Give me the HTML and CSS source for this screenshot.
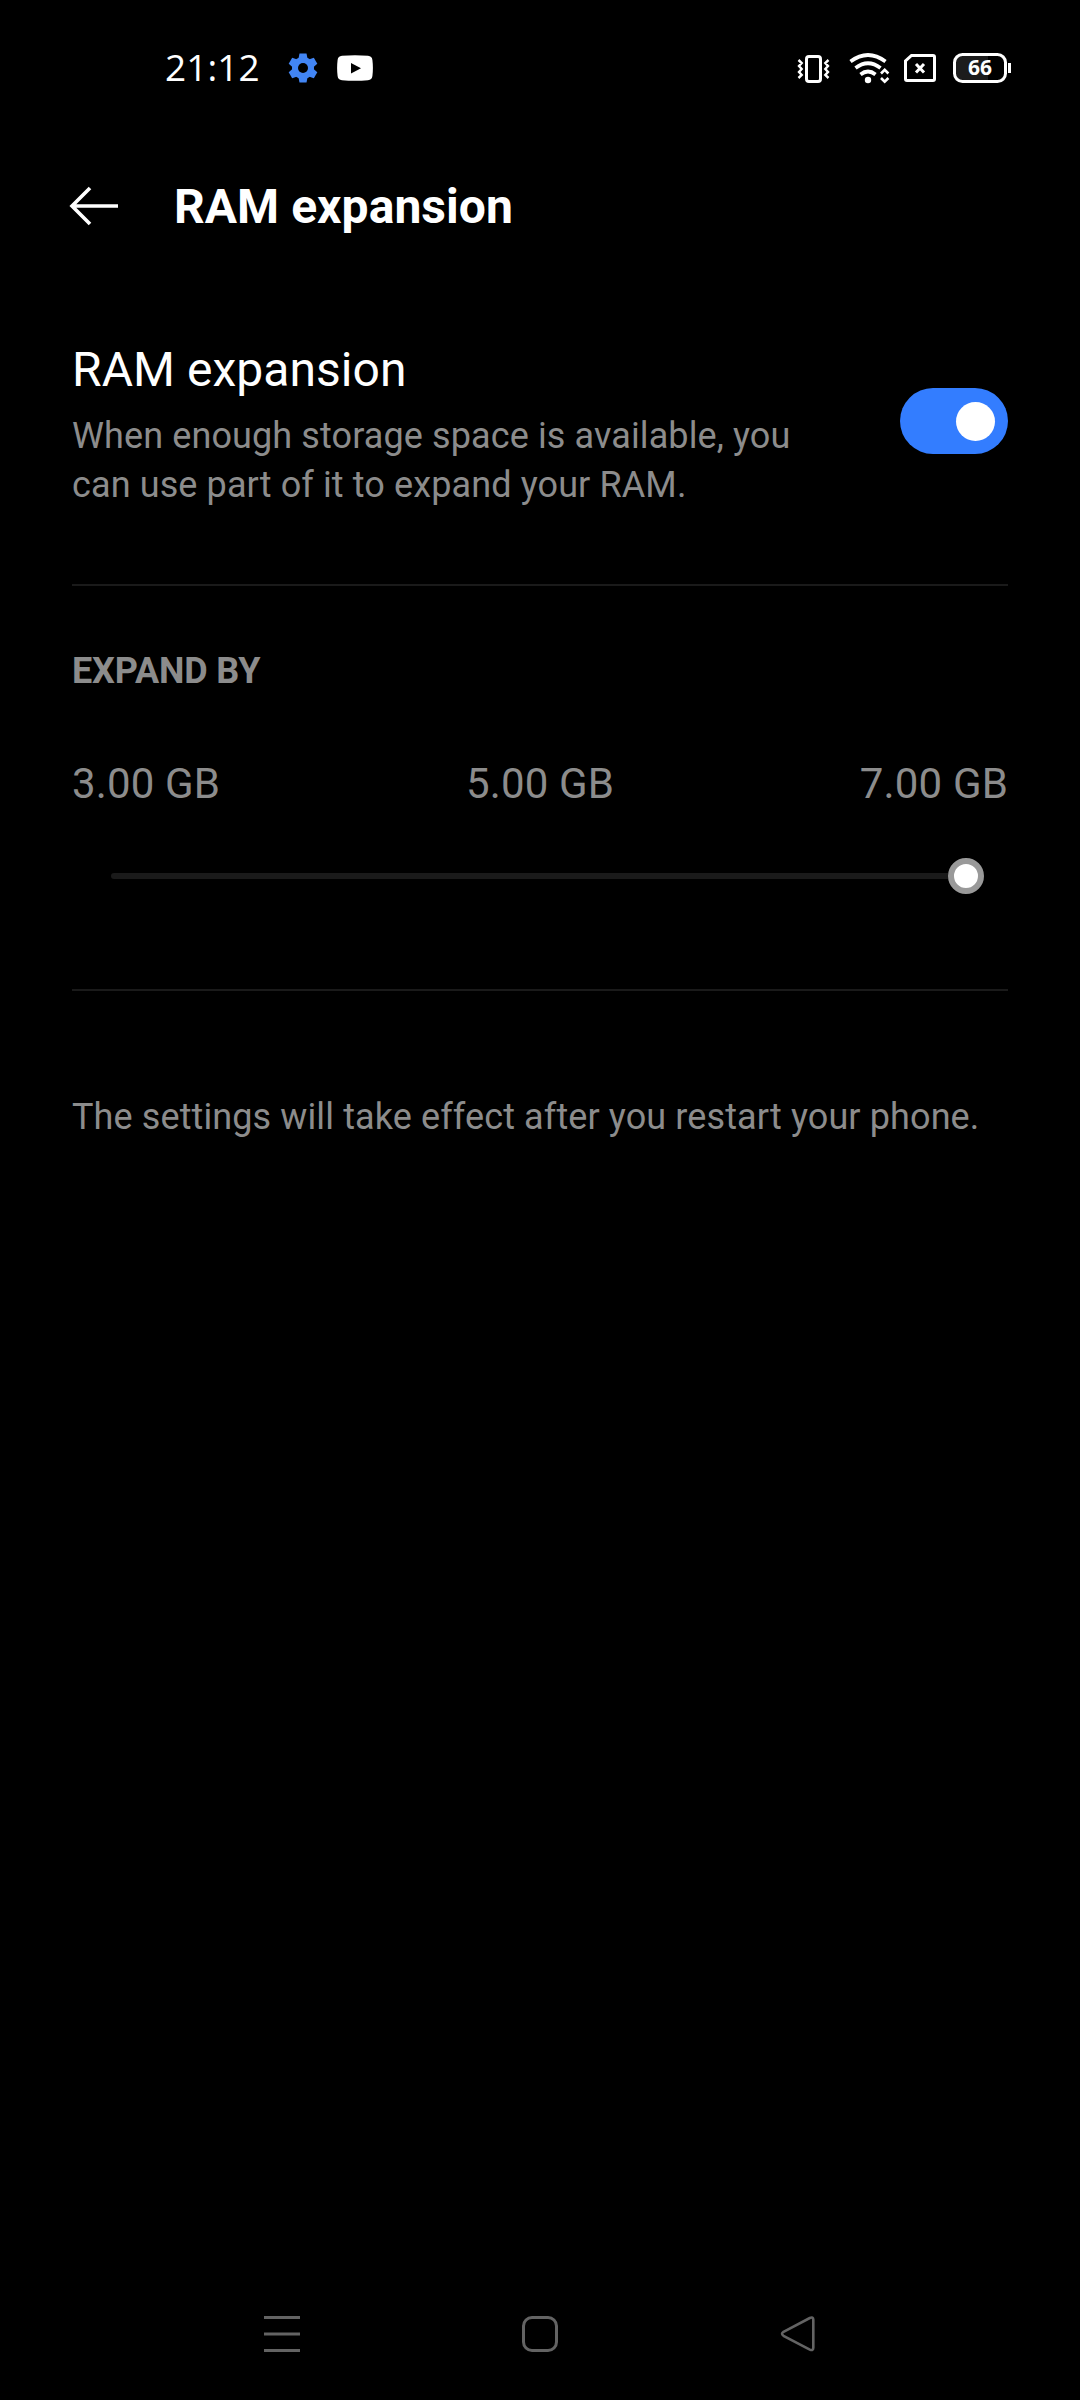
FILE: index.html
```html
<!DOCTYPE html>
<html lang="en">
<head>
<meta charset="utf-8">
<title>RAM expansion</title>
<link rel="stylesheet" href="styles.css">
</head>
<body>
<div class="screen">
  <div class="status-bar">
    <div class="status-left">
      <span class="clock">21:12</span>
      <svg class="gear" width="30" height="30" viewBox="-15 -15 30 30">
        <g fill="#4285f4">
          <circle r="11"/>
          <path id="tooth" d="M-3.5-14.5h7l1.2 6h-9.4z"/>
          <use href="#tooth" transform="rotate(60)"/>
          <use href="#tooth" transform="rotate(120)"/>
          <use href="#tooth" transform="rotate(180)"/>
          <use href="#tooth" transform="rotate(240)"/>
          <use href="#tooth" transform="rotate(300)"/>
        </g>
        <circle r="5" fill="#000"/>
      </svg>
      <svg class="video" width="36" height="26" viewBox="0 0 36 26">
        <path d="M5 .8Q18-.4 31 .8Q35 1.200 35.400 5Q36.400 13 35.400 21Q35 24.800 31 25.200Q18 26.400 5 25.200Q1 24.800.6 21Q-.4 13 .6 5Q1 1.200 5 .8z" fill="#fff"/>
        <path d="M14 8l10 5.200-10 5.200z" fill="#000"/>
      </svg>
    </div>
    <svg class="status-icons" width="216" height="34" viewBox="797 51 216 34" fill="none" stroke="#fff" stroke-width="3">
      <rect x="806.500" y="56.500" width="14" height="25" rx="2.500"/>
      <path d="M798.500 60l3.200 3-2.700 3 2.700 3-2.700 3 2.700 3-3.200 3M828.500 60l-3.200 3 2.700 3-2.700 3 2.700 3-2.700 3 3.200 3" stroke-width="2.400"/>
      <path d="M850.500 61.500Q868 48.500 885.500 61.500" stroke-width="3.700"/>
      <path d="M855.500 68Q868 58.500 880.500 68" stroke-width="3.700"/>
      <path d="M860.500 74.500Q868 68.500 875.500 74.500" stroke-width="3.700"/>
      <circle cx="868" cy="80" r="3.200" fill="#fff" stroke="none"/>
      <path d="M881 73.500l3.700-3.700 3.700 3.700M881 78l3.700 3.700 3.700-3.700" stroke-width="2.600"/>
      <path d="M911.500 55.500H933Q934.500 55.500 934.500 57V79Q934.500 80.500 933 80.500H907Q905.500 80.500 905.500 79V61z"/>
      <path d="M916 64l8 8.500M924 64l-8 8.500"/>
      <path d="M962 54.500h26v27h-26q-7.500 0-7.500-7.500v-12q0-7.500 7.500-7.500z" fill="#1c1c1c" stroke="none"/>
      <rect x="954.500" y="54.500" width="51" height="27" rx="8"/>
      <path d="M1009.500 63v10"/>
      <text class="battery-level" x="980" y="75" text-anchor="middle">66</text>
    </svg>
  </div>

  <header class="app-bar">
    <svg class="back" width="50" height="40" viewBox="0 0 50 40" fill="none" stroke="#fff" stroke-width="3.600">
      <path d="M49 20H3M21 2L3 20l18 18"/>
    </svg>
    <h1 class="title">RAM expansion</h1>
  </header>

  <main class="content">
    <section class="setting">
      <div class="setting-text">
        <h2 class="setting-title">RAM expansion</h2>
        <p class="body-text">When enough storage space is available, you<br>can use part of it to expand your RAM.</p>
      </div>
      <div class="toggle" role="switch" aria-checked="true"><div class="knob"></div></div>
    </section>
    <section class="expand">
      <h3 class="section-title">EXPAND BY</h3>
      <div class="sizes"><span>3.00 GB</span><span>5.00 GB</span><span>7.00 GB</span></div>
      <div class="slider"><div class="track"></div><div class="thumb"></div></div>
    </section>
    <p class="body-text note">The settings will take effect after you restart your phone.</p>
  </main>

  <nav class="nav-bar">
    <svg width="40" height="40" viewBox="0 0 40 40" fill="none" stroke="#636363" stroke-width="3"><path d="M2 3.500h36M2 20h36M2 36.500h36"/></svg>
    <svg width="40" height="40" viewBox="0 0 40 40" fill="none" stroke="#636363" stroke-width="3"><rect x="3.500" y="3.500" width="33" height="33" rx="8.500"/></svg>
    <svg width="40" height="40" viewBox="0 0 40 40" fill="none" stroke="#636363" stroke-width="2.600"><path d="M5.500 17.800L31.800 4Q35.300 2.600 35.300 5.800V33.800Q35.300 37 31.800 35.600L5.500 21.800Q2.600 19.800 5.500 17.800z"/></svg>
  </nav>
</div>
</body>
</html>
```
FILE: styles.css
```css
* { box-sizing: border-box; margin: 0; padding: 0; }
body { background: #000; color: #fff; font-family: Roboto, sans-serif; }
svg { display: block; flex: none; }
.screen { width: 1080px; height: 2400px; display: flex; flex-direction: column; }

.status-bar { height: 136px; padding-left: 165px; padding-right: 67px; display: flex; align-items: center; justify-content: space-between; }
.status-left { display: flex; align-items: center; }
.clock { width: 123px; padding-bottom: 2px; font: 400 37px/50px "Open Sans", "Noto Sans", sans-serif; letter-spacing: 0.1px; }
.video { margin-left: 19px; }
.battery-level { font: 700 21px "Open Sans", "Noto Sans", sans-serif; fill: #fff; stroke: none; }

.app-bar { height: 139px; padding-top: 1px; padding-left: 69px; display: flex; align-items: center; }
.title { margin-left: 55px; padding-top: 2px; font-size: 48px; line-height: 56px; font-weight: 700; letter-spacing: 0.05px; white-space: nowrap; }

.content { flex: 1; padding: 0 72px; }
.setting { height: 311px; padding-top: 67px; border-bottom: 2px solid #1a1a1a; display: flex; justify-content: space-between; }
.setting-title { font-size: 48px; line-height: 56px; font-weight: 400; letter-spacing: 0.05px; white-space: nowrap; }
.body-text { color: #8c8c8c; font-size: 36px; line-height: 49px; letter-spacing: 0.11px; white-space: nowrap; }
.setting-text .body-text { margin-top: 14px; }
.toggle { width: 108px; height: 66px; margin-top: 46px; padding-right: 13px; border-radius: 33px; background: #337dff; display: flex; align-items: center; justify-content: flex-end; }
.knob { width: 39px; height: 39px; border-radius: 50%; background: #fff; }

.expand { height: 405px; padding-top: 64px; border-bottom: 2px solid #1a1a1a; }
.section-title { color: #8c8c8c; font-size: 36px; line-height: 42px; font-weight: 700; letter-spacing: -0.15px; }
.sizes { margin-top: 67px; display: flex; justify-content: space-between; color: #8c8c8c; font-size: 42px; line-height: 50px; letter-spacing: 0.15px; }
.slider { height: 36px; margin: 49px 24px 0 39px; display: flex; align-items: center; }
.track { flex: 1; height: 6px; border-radius: 3px 0 0 3px; background: #1a1a1a; }
.thumb { width: 36px; height: 36px; border: 6px solid #999; border-radius: 50%; background: #fff; }
.note { margin-top: 102px; }

.nav-bar { height: 132px; padding: 0 262px; display: flex; align-items: center; justify-content: space-between; }
```
